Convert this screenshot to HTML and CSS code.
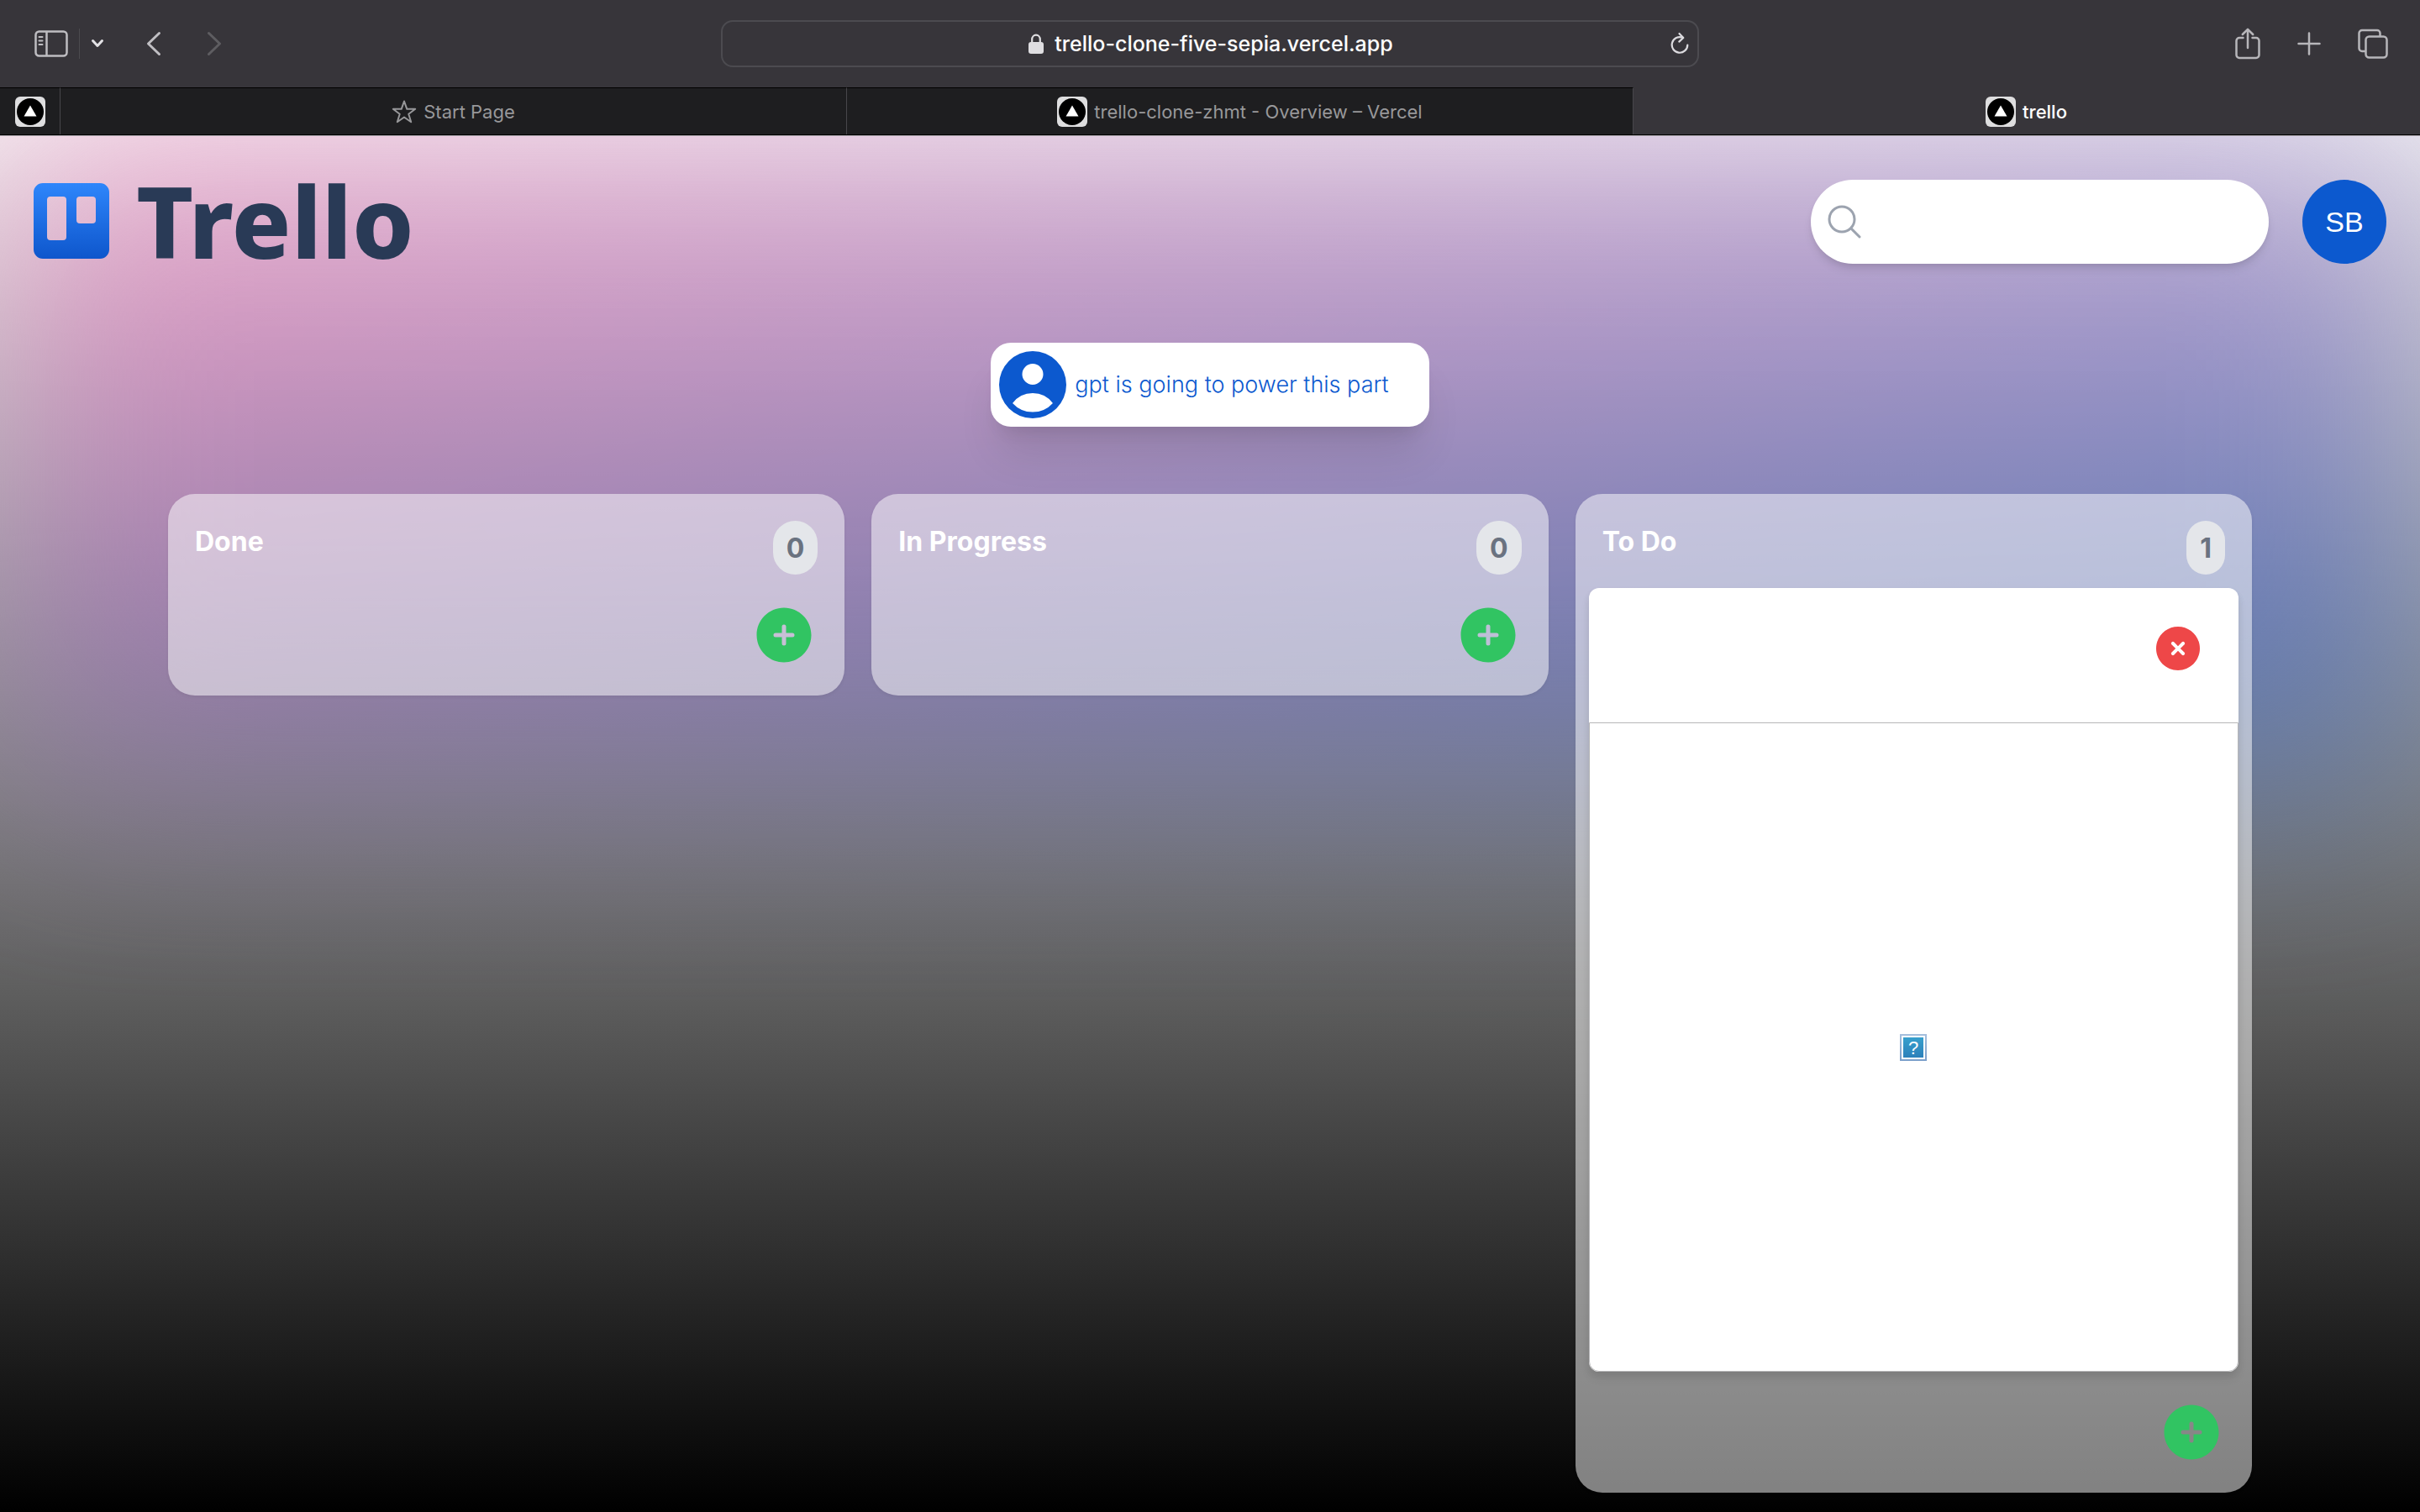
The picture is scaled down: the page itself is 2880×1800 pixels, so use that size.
FILE: index.html
```html
<!DOCTYPE html>
<html lang="en">
<head>
<meta charset="utf-8">
<title>trello</title>
<link rel="stylesheet" href="styles.css">
</head>
<body>
<svg class="sprite" aria-hidden="true">
  <symbol id="vercel" viewBox="0 0 36 36">
    <rect width="36" height="36" rx="6" fill="#dededf"/>
    <circle cx="18" cy="18" r="16" fill="#000"/>
    <path d="M18 10.500l7.500 13h-15z" fill="#fff"/>
  </symbol>
  <symbol id="plus-circle" viewBox="0 0 24 24">
    <path fill-rule="evenodd" clip-rule="evenodd" d="M12 2.250c-5.385 0-9.750 4.365-9.750 9.750s4.365 9.750 9.750 9.750 9.750-4.365 9.750-9.750S17.385 2.250 12 2.250ZM12.750 9a.75.75 0 0 0-1.500 0v2.250H9a.75.75 0 0 0 0 1.500h2.250V15a.75.75 0 0 0 1.500 0v-2.250H15a.75.75 0 0 0 0-1.500h-2.250V9Z"/>
  </symbol>
</svg>

<header class="browser">
  <div class="toolbar">
    <div class="tools">
      <button class="tool sidebar-tool" aria-label="Show sidebar">
        <svg width="40" height="32" viewBox="0 0 40 32" fill="none" stroke="#bebdc1" stroke-width="2.500"><rect x="1.500" y="1.500" width="37" height="29" rx="4"/><path d="M14.500 2v28"/><path d="M5.500 8h4M5.500 12.500h4M5.500 17h4" stroke-width="2" stroke-linecap="round"/></svg>
      </button>
      <button class="tool group-tool" aria-label="Tab groups">
        <svg width="16" height="12" viewBox="0 0 16 12" fill="none" stroke="#e3e2e5" stroke-width="3" stroke-linecap="round" stroke-linejoin="round"><path d="M2.500 2.500 8 8.500l5.500-6"/></svg>
      </button>
      <button class="tool back-tool" aria-label="Back">
        <svg width="18" height="30" viewBox="0 0 18 30" fill="none" stroke="#c0bfc3" stroke-width="3" stroke-linecap="round" stroke-linejoin="round"><path d="M15.500 2.500 2.500 15l13 12.500"/></svg>
      </button>
      <button class="tool" aria-label="Forward">
        <svg width="18" height="30" viewBox="0 0 18 30" fill="none" stroke="#5e5d61" stroke-width="3" stroke-linecap="round" stroke-linejoin="round"><path d="M2.500 2.500 15.500 15l-13 12.500"/></svg>
      </button>
    </div>
    <div class="address">
      <svg class="lock" width="18" height="24" viewBox="0 0 18 24"><rect y="10" width="18" height="14" rx="3" fill="#dfdee1"/><path d="M4.200 11V7a4.800 5.300 0 0 1 9.600 0v4" fill="none" stroke="#dfdee1" stroke-width="2.200"/></svg>
      <input class="url" type="text" aria-label="Address" value="trello-clone-five-sepia.vercel.app">
      <button class="tool reload" aria-label="Reload">
        <svg width="22" height="28" viewBox="0 0 22 28" fill="none" stroke="#dcdbdf" stroke-width="2.200" stroke-linecap="round" stroke-linejoin="round"><path d="M14.500 6.800A9.300 9.300 0 1 0 20.300 15.500"/><path d="M10.500 2l4.800 5-5 4.600"/></svg>
      </button>
    </div>
    <div class="tools tools-end">
      <button class="tool" aria-label="Share">
        <svg width="30" height="38" viewBox="0 0 30 38" fill="none" stroke="#b7b6ba" stroke-width="2.500" stroke-linecap="round" stroke-linejoin="round"><path d="M9.500 12H5a3.500 3.500 0 0 0-3.500 3.500v17A3.500 3.500 0 0 0 5 36h20a3.500 3.500 0 0 0 3.500-3.500v-17A3.500 3.500 0 0 0 25 12h-4.500"/><path d="M15 24V2M8.800 8 15 1.800 21.200 8"/></svg>
      </button>
      <button class="tool" aria-label="New tab">
        <svg width="28" height="28" viewBox="0 0 28 28" fill="none" stroke="#b7b6ba" stroke-width="2.500" stroke-linecap="round"><path d="M14 1.500v25M1.500 14h25"/></svg>
      </button>
      <button class="tool" aria-label="Tab overview">
        <svg width="36" height="36" viewBox="0 0 36 36" fill="none" stroke="#b7b6ba" stroke-width="2.500"><path d="M9.500 27H5a3.500 3.500 0 0 1-3.500-3.500v-18A3.500 3.500 0 0 1 5 2h18a3.500 3.500 0 0 1 3.500 3.500V9"/><rect x="9.500" y="9.500" width="25" height="25" rx="4"/></svg>
      </button>
    </div>
  </div>
  <nav class="tabs">
    <a class="tab tab-pinned" href="#" aria-label="Vercel"><svg class="favicon"><use href="#vercel"/></svg></a>
    <a class="tab" href="#">
      <svg class="star" width="30" height="28" viewBox="0 0 30 28" fill="none" stroke="#98989a" stroke-width="2" stroke-linejoin="round"><path d="M15 1.500l3.300 9.300h9.900l-7.900 5.900 2.900 9.500-8.200-5.700-8.200 5.700 2.900-9.500-7.900-5.900h9.900z"/></svg>
      <span>Start Page</span>
    </a>
    <a class="tab" href="#"><svg class="favicon"><use href="#vercel"/></svg><span>trello-clone-zhmt - Overview – Vercel</span></a>
    <a class="tab tab-active" href="#"><svg class="favicon"><use href="#vercel"/></svg><span>trello</span></a>
  </nav>
</header>

<main class="page">
  <div class="glow"></div>
  <header class="masthead">
    <a class="logo" href="#">
      <svg width="90" height="90" viewBox="0 0 90 90">
        <defs><linearGradient id="mark" x1="0" y1="0" x2="0" y2="1"><stop offset="0" stop-color="#2e86fb"/><stop offset="1" stop-color="#0e56cc"/></linearGradient></defs>
        <path fill="url(#mark)" fill-rule="evenodd" d="M11 0h68a11 11 0 0 1 11 11v68a11 11 0 0 1-11 11H11A11 11 0 0 1 0 79V11A11 11 0 0 1 11 0ZM20 16a4 4 0 0 0-4 4v44a4 4 0 0 0 4 4h15a4 4 0 0 0 4-4V20a4 4 0 0 0-4-4ZM55 16a4 4 0 0 0-4 4v24a4 4 0 0 0 4 4h15a4 4 0 0 0 4-4V20a4 4 0 0 0-4-4Z"/>
      </svg>
      <span>Trello</span>
    </a>
    <form class="search">
      <svg width="48" height="48" viewBox="0 0 24 24" fill="none" stroke="#9ca3af" stroke-width="1.500" stroke-linecap="round" stroke-linejoin="round"><path d="m21 21-5.197-5.197m0 0A7.500 7.500 0 1 0 5.196 5.196a7.500 7.500 0 0 0 10.607 10.607Z"/></svg>
      <input class="search-field" type="text" aria-label="Search">
    </form>
    <button class="avatar">SB</button>
  </header>

  <p class="suggestion">
    <svg width="100" height="100" viewBox="0 0 20 20" fill="#0c59cf"><path fill-rule="evenodd" clip-rule="evenodd" d="M18 10a8 8 0 1 1-16 0 8 8 0 0 1 16 0Zm-5.500-2.500a2.500 2.500 0 1 1-5 0 2.500 2.500 0 0 1 5 0ZM10 12a5.990 5.990 0 0 0-4.793 2.390A6.483 6.483 0 0 0 10 16.500a6.483 6.483 0 0 0 4.793-2.110A5.990 5.990 0 0 0 10 12Z"/></svg>
    <span>gpt is going to power this part</span>
  </p>

  <div class="board">
    <section class="column">
      <div class="column-head"><h2>Done</h2><span class="count">0</span></div>
      <div class="column-foot"><button class="add" aria-label="Add to Done"><svg><use href="#plus-circle"/></svg></button></div>
    </section>
    <section class="column">
      <div class="column-head"><h2>In Progress</h2><span class="count">0</span></div>
      <div class="column-foot"><button class="add" aria-label="Add to In Progress"><svg><use href="#plus-circle"/></svg></button></div>
    </section>
    <section class="column">
      <div class="column-head"><h2>To Do</h2><span class="count">1</span></div>
      <article class="card">
        <div class="card-head">
          <button class="remove" aria-label="Delete task">
            <svg width="64" height="64" viewBox="0 0 24 24" fill="#ee4748"><path fill-rule="evenodd" clip-rule="evenodd" d="M12 2.250c-5.385 0-9.750 4.365-9.750 9.750s4.365 9.750 9.750 9.750 9.750-4.365 9.750-9.750S17.385 2.250 12 2.250Zm-1.720 6.970a.75.75 0 1 0-1.060 1.060L10.940 12l-1.720 1.720a.75.75 0 1 0 1.060 1.060L12 13.060l1.720 1.720a.75.75 0 1 0 1.060-1.060L13.060 12l1.720-1.720a.75.75 0 1 0-1.060-1.060L12 10.940l-1.720-1.720Z"/></svg>
          </button>
        </div>
        <div class="card-image">
          <svg width="32" height="32" viewBox="0 0 32 32">
            <defs>
              <linearGradient id="missing" x1="0" y1="0" x2="0" y2="1"><stop offset="0" stop-color="#37a0cd"/><stop offset="1" stop-color="#2c80ba"/></linearGradient>
              <linearGradient id="frame" x1="0" y1="0" x2="0" y2="1"><stop offset="0" stop-color="#a5bfdd"/><stop offset="1" stop-color="#7b9fca"/></linearGradient>
            </defs>
            <rect width="32" height="32" fill="url(#frame)"/><rect x="2" y="2" width="28" height="28" fill="#fff"/><rect x="4" y="4" width="24" height="24" fill="url(#missing)"/>
            <text class="missing-mark" x="16" y="24" text-anchor="middle">?</text>
          </svg>
        </div>
      </article>
      <div class="column-foot"><button class="add" aria-label="Add to To Do"><svg><use href="#plus-circle"/></svg></button></div>
    </section>
  </div>
</main>
</body>
</html>
```
FILE: styles.css
```css
* { box-sizing: border-box; }

body {
  margin: 0;
  min-height: 100vh;
  display: flex;
  flex-direction: column;
  font-family: Inter, "Liberation Sans", sans-serif;
}

button {
  padding: 0;
  border: 0;
  background: none;
  font: inherit;
}

svg { display: block; }

a { color: inherit; text-decoration: none; }

.sprite { position: absolute; width: 0; height: 0; }

/* Browser window */

.browser {
  background: #37353a;
  border-bottom: 1px solid #a9a3aa;
}

.toolbar {
  display: grid;
  grid-template-columns: 1fr minmax(0, 1164px) 1fr;
  align-items: center;
  height: 104px;
}

.tools {
  display: flex;
  align-items: center;
  padding: 0 41px;
}

.tools-end { justify-content: flex-end; gap: 44px; padding: 0 38px; }

.sidebar-tool { padding-right: 13px; }

.group-tool {
  display: flex;
  align-items: center;
  height: 36px;
  padding: 0 50px 0 13px;
  border-left: 1px solid #4c4b4f;
}

.back-tool { padding-right: 54px; }

.address {
  display: flex;
  align-items: center;
  justify-content: center;
  gap: 13px;
  position: relative;
  height: 56px;
  padding-left: 2px;
  border: 2px solid #4c4b50;
  border-radius: 14px;
}

.url {
  field-sizing: content;
  padding: 0;
  border: 0;
  outline: 0;
  background: none;
  color: #fff;
  font: 500 25px/32px Inter, "Liberation Sans", sans-serif;
}

.reload {
  position: absolute;
  right: 10px;
}

.tabs {
  display: flex;
  height: 57px;
  background: #1e1e20;
  border-bottom: 1px solid #000;
}

.tab {
  flex: 1;
  display: flex;
  align-items: center;
  justify-content: center;
  gap: 8px;
  border-top: 1px solid #000;
  border-right: 1px solid #48474b;
  color: #98989a;
  font-size: 22px;
  line-height: 28px;
}

.tab-pinned { flex: 0 0 72px; }

.tab-active {
  background: #37353a;
  border-color: #37353a;
  color: #fff;
  font-weight: 500;
}

.favicon { width: 36px; height: 36px; }

/* Page */

.page {
  flex: 1;
  display: flex;
  flex-direction: column;
  position: relative;
  isolation: isolate;
  overflow: hidden;
  padding-bottom: 20px;
  background: linear-gradient(#f0f0f0, #848484 47%, #000);
}

.glow {
  position: absolute;
  z-index: -1;
  top: 0;
  left: 0;
  width: 100%;
  height: 768px;
  border-radius: 12px;
  background: linear-gradient(to bottom right, #f062ac 6%, #0c5acf);
  filter: blur(128px);
  opacity: 0.5;
}

.masthead {
  display: flex;
  align-items: flex-start;
  gap: 40px;
  padding: 52px 40px 0;
}

.logo {
  display: flex;
  align-items: center;
  gap: 32px;
  height: 98px;
  margin-right: auto;
  color: #293a56;
  font: 800 117px/98px "Noto Sans", "Open Sans", sans-serif;
}

.search {
  display: flex;
  align-items: center;
  gap: 20px;
  width: 545px;
  height: 100px;
  padding: 0 16px;
  border-radius: 50px;
  background: #fff;
  box-shadow: 0 8px 12px -2px rgb(0 0 0 / 0.1), 0 4px 8px -4px rgb(0 0 0 / 0.1);
}

.search-field {
  flex: 1;
  min-width: 0;
  border: 0;
  outline: 0;
  background: none;
  font: 32px/48px Inter, "Liberation Sans", sans-serif;
}

.avatar {
  width: 100px;
  height: 100px;
  border-radius: 50%;
  background: #0c59cf;
  color: #fff;
  font: 34px/100px "Liberation Sans", Arial, sans-serif;
}

.suggestion {
  display: flex;
  align-items: center;
  align-self: center;
  margin: 94px 0 80px;
  padding-right: 48px;
  border-radius: 24px;
  background: #fff;
  box-shadow: 0 40px 50px -10px rgb(0 0 0 / 0.1), 0 16px 20px -12px rgb(0 0 0 / 0.1);
  color: #0c59cf;
  font-size: 27px;
  font-weight: 300;
  line-height: 40px;
}

.board {
  display: grid;
  grid-template-columns: repeat(3, 1fr);
  align-items: start;
  gap: 32px;
  width: 100%;
  max-width: 2560px;
  margin: 0 auto;
  padding: 0 40px;
}

.column {
  padding: 16px;
  border-radius: 32px;
  background: rgb(255 255 255 / 0.5);
  box-shadow: 0 2px 4px rgb(0 0 0 / 0.05);
}

.column-head {
  display: flex;
  align-items: flex-start;
  justify-content: space-between;
  padding: 16px;
}

.column-head h2 {
  margin: 0;
  color: #fff;
  font-size: 32px;
  font-weight: 700;
  line-height: 50px;
}

.count {
  padding: 8px 16px 6px;
  border-radius: 32px;
  background: #e4e6ea;
  color: #6a7280;
  font-size: 32px;
  font-weight: 700;
  line-height: 50px;
}

.column-foot {
  display: flex;
  justify-content: flex-end;
  padding: 16px;
}

.add svg {
  width: 80px;
  height: 80px;
  fill: #31c462;
}

.card {
  margin-bottom: 16px;
  border-radius: 12px;
  background: #fff;
  box-shadow: 0 8px 12px rgb(0 0 0 / 0.07), 0 4px 8px rgb(0 0 0 / 0.06);
}

.card-head {
  display: flex;
  align-items: flex-start;
  justify-content: flex-end;
  height: 160px;
  padding: 40px;
}

.card-image {
  display: flex;
  align-items: center;
  justify-content: center;
  aspect-ratio: 1;
  border: 1px solid #b6b6b8;
  border-radius: 0 0 12px 12px;
}

.missing-mark {
  fill: #fff;
  font: 22px "Liberation Sans", Arial, sans-serif;
}
```
